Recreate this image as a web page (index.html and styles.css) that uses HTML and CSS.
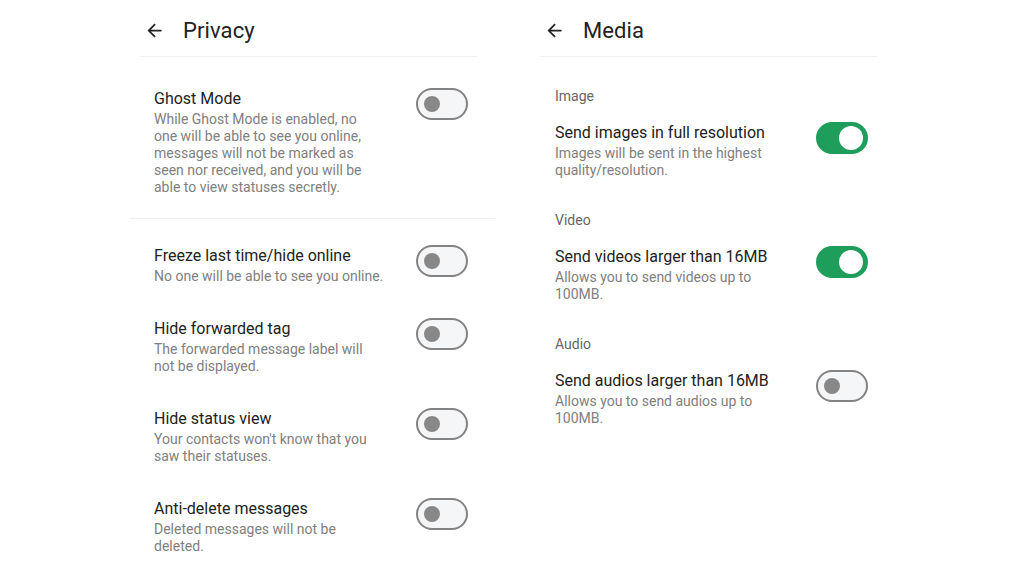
FILE: index.html
```html
<!DOCTYPE html>
<html>
<head>
<meta charset="utf-8">
<link rel="stylesheet" href="styles.css">
</head>
<body>
<div class="screens">
  <section class="panel">
    <header class="bar">
      <svg class="back" viewBox="0 0 24 24" width="21" height="21"><path d="M20 11H7.83l5.59-5.59L12 4l-8 8 8 8 1.41-1.41L7.83 13H20v-2z" fill="#222"/></svg>
      <h1 class="title">Privacy</h1>
    </header>
    <div class="list first">
      <div class="item">
        <div class="text">
          <div class="name">Ghost Mode</div>
          <div class="desc">While Ghost Mode is enabled, no<br>one will be able to see you online,<br>messages will not be marked as<br>seen nor received, and you will be<br>able to view statuses secretly.</div>
        </div>
        <span class="toggle"></span>
      </div>
    </div>
    <div class="sep"></div>
    <div class="list rest">
      <div class="item">
        <div class="text">
          <div class="name">Freeze last time/hide online</div>
          <div class="desc">No one will be able to see you online.</div>
        </div>
        <span class="toggle"></span>
      </div>
      <div class="item">
        <div class="text">
          <div class="name">Hide forwarded tag</div>
          <div class="desc">The forwarded message label will<br>not be displayed.</div>
        </div>
        <span class="toggle"></span>
      </div>
      <div class="item">
        <div class="text">
          <div class="name">Hide status view</div>
          <div class="desc">Your contacts won't know that you<br>saw their statuses.</div>
        </div>
        <span class="toggle"></span>
      </div>
      <div class="item">
        <div class="text">
          <div class="name">Anti-delete messages</div>
          <div class="desc">Deleted messages will not be<br>deleted.</div>
        </div>
        <span class="toggle"></span>
      </div>
    </div>
  </section>

  <section class="panel">
    <header class="bar">
      <svg class="back" viewBox="0 0 24 24" width="21" height="21"><path d="M20 11H7.83l5.59-5.59L12 4l-8 8 8 8 1.41-1.41L7.83 13H20v-2z" fill="#222"/></svg>
      <h1 class="title">Media</h1>
    </header>
    <div class="media">
      <div class="group">
        <div class="label">Image</div>
        <div class="item">
          <div class="text">
            <div class="name">Send images in full resolution</div>
            <div class="desc">Images will be sent in the highest<br>quality/resolution.</div>
          </div>
          <span class="toggle on"></span>
        </div>
      </div>
      <div class="group">
        <div class="label">Video</div>
        <div class="item">
          <div class="text">
            <div class="name">Send videos larger than 16MB</div>
            <div class="desc">Allows you to send videos up to<br>100MB.</div>
          </div>
          <span class="toggle on"></span>
        </div>
      </div>
      <div class="group">
        <div class="label">Audio</div>
        <div class="item">
          <div class="text">
            <div class="name">Send audios larger than 16MB</div>
            <div class="desc">Allows you to send audios up to<br>100MB.</div>
          </div>
          <span class="toggle"></span>
        </div>
      </div>
    </div>
  </section>
</div>
</body>
</html>
```

FILE: styles.css
```css
* { box-sizing: border-box; }
html, body { margin: 0; padding: 0; background: #fff; }
body {
  font-family: Roboto, "Noto Sans", sans-serif;
  color: #222;
  width: 1024px;
  height: 576px;
  overflow: hidden;
}
.screens {
  display: flex;
  gap: 35px;
  padding-left: 130px;
}
.panel {
  width: 365px;
  display: flex;
  flex-direction: column;
}
.bar {
  height: 57px;
  display: flex;
  align-items: center;
  padding-left: 4px;
  padding-top: 4px;
  margin: 0 18px 0 10px;
  border-bottom: 1px solid #f0f0f0;
}
.back { display: block; margin-top: 0; }
.title {
  margin: 0 0 0 18px;
  font-size: 22px;
  font-weight: 400;
  color: #222;
  letter-spacing: 0.1px;
}
.list {
  display: flex;
  flex-direction: column;
  gap: 34px;
  padding: 0 27px 0 24px;
}
.list.first { padding-top: 32px; padding-bottom: 22px; }
.list.rest { padding-top: 27px; }
.sep {
  height: 1px;
  background: #f1f1f1;
}
.item {
  display: flex;
  justify-content: space-between;
  align-items: flex-start;
}
.name {
  font-size: 16px;
  line-height: 20px;
  color: #222;
}
.desc {
  font-size: 14px;
  line-height: 17px;
  color: #808080;
  margin-top: 2px;
}
.toggle {
  flex: none;
  position: relative;
  width: 52px;
  height: 32px;
  margin-top: -1px;
  border-radius: 16px;
  border: 2px solid #838383;
  background: #f5f6f8;
}
.toggle::after {
  content: "";
  position: absolute;
  left: 6px;
  top: 6px;
  width: 16px;
  height: 16px;
  border-radius: 50%;
  background: #888;
}
.toggle.on {
  border-color: #1f9e5b;
  background: #1f9e5b;
}
.toggle.on::after {
  left: auto;
  right: 3px;
  top: 2px;
  width: 24px;
  height: 24px;
  background: #fff;
}
.media {
  display: flex;
  flex-direction: column;
  gap: 32px;
  padding: 30px 27px 0 25px;
}
.label {
  font-size: 14px;
  line-height: 18px;
  color: #666;
  margin-bottom: 18px;
}
```
